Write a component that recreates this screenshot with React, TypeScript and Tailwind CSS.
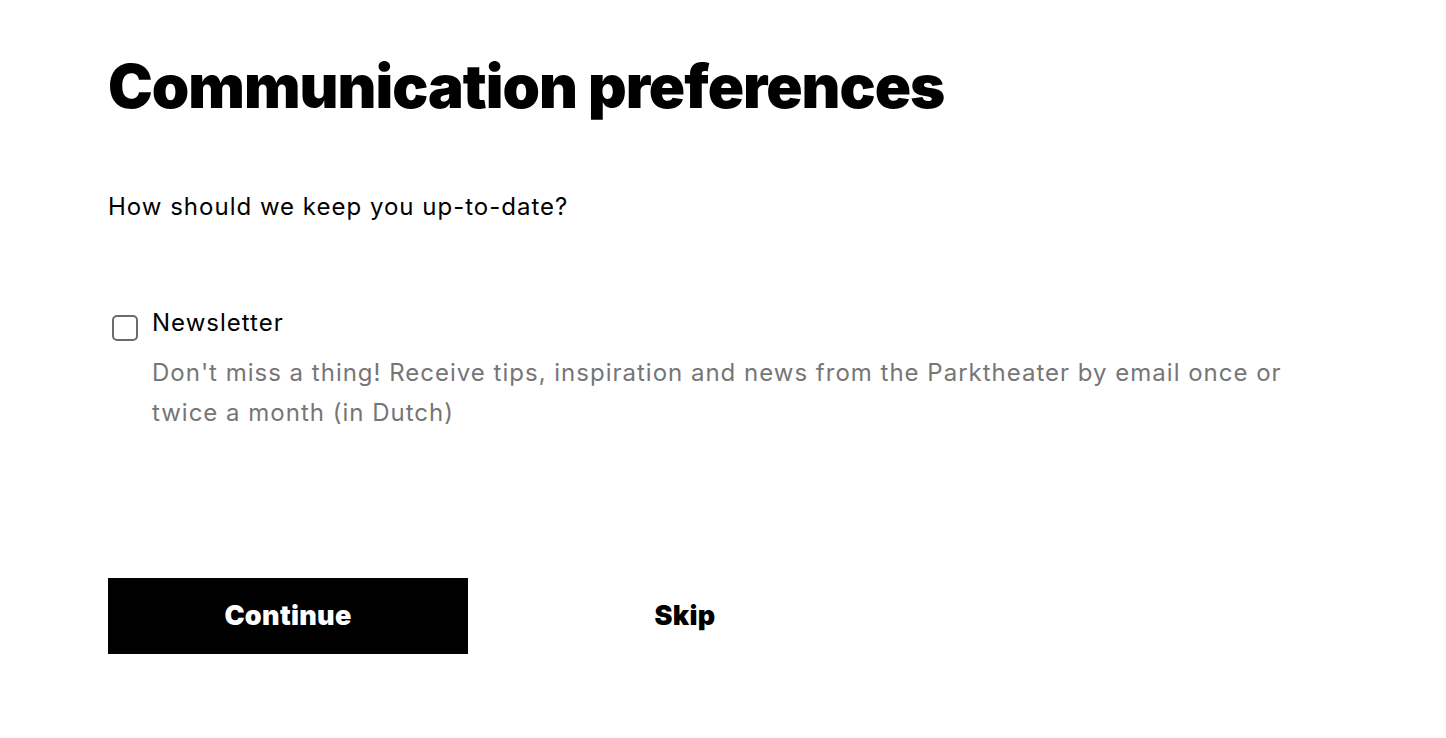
const App = () => {
  return (
    <div className="min-h-screen bg-white font-['Inter',sans-serif] text-black">
      <div className="px-[108px] pt-[48px]">
        <h1 className="text-[60px] font-black leading-[76px] tracking-[-1px]">
          Communication preferences
        </h1>
        <p className="mt-[66px] text-[24px] leading-[34px] tracking-[1px]">How should we keep you up-to-date?</p>

        <div className="mt-[83px] flex items-start">
          <input
            type="checkbox"
            className="mt-[8px] ml-[4px] h-[26px] w-[26px] shrink-0 appearance-none rounded-[5px] border-2 border-[#6b6b6b] bg-white"
          />
          <div className="ml-[14px]">
            <div className="text-[24px] leading-[32px] tracking-[1px]">Newsletter</div>
            <p className="mt-[14px] max-w-[1140px] text-[24px] leading-[40px] tracking-[1px] text-[#767676]">
              Don't miss a thing! Receive tips, inspiration and news from the Parktheater by email once or twice a month (in Dutch)
            </p>
          </div>
        </div>

        <div className="mt-[145px] flex items-center">
          <button className="h-[76px] w-[360px] bg-black text-[27px] font-black text-white tracking-[0.3px]">Continue</button>
          <button className="ml-[37px] h-[76px] w-[360px] bg-white text-[27px] font-black text-black tracking-[0.3px]">Skip</button>
        </div>
      </div>
    </div>
  );
};

export default App;
